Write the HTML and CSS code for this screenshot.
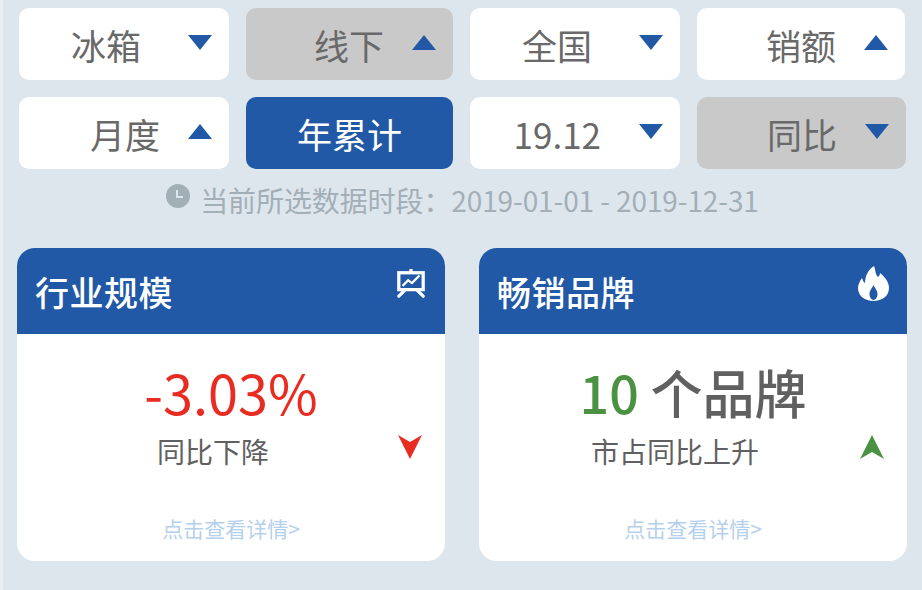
FILE: index.html
```html
<!DOCTYPE html>
<html lang="zh-CN">
  <head>
    <meta charset="UTF-8" />
    <meta name="viewport" content="width=device-width, initial-scale=1.0" />
    <title>行业规模</title>
    <link rel="stylesheet" href="styles.css">
  </head>

  <body>
    <div class="filters">
      <div class="sel"><span class="sel-text gap-l">冰箱</span><i class="arrow down"></i></div>
      <div class="sel gray"><span class="sel-text gap-s">线下</span><i class="arrow up"></i></div>
      <div class="sel"><span class="sel-text gap-l">全国</span><i class="arrow down"></i></div>
      <div class="sel"><span class="sel-text gap-s">销额</span><i class="arrow up"></i></div>
      <div class="sel"><span class="sel-text gap-s">月度</span><i class="arrow up"></i></div>
      <div class="sel active"><span class="sel-text">年累计</span></div>
      <div class="sel"><span class="sel-text gap-m">19.12</span><i class="arrow down"></i></div>
      <div class="sel gray wider"><span class="sel-text gap-s">同比</span><i class="arrow down"></i></div>
    </div>

    <div class="period">
      <svg class="clock" viewBox="0 0 24 24">
        <circle cx="12" cy="12" r="12" fill="#a3afb7" />
        <path d="M11 6v7h6" fill="none" stroke="#dee6ed" stroke-width="2" />
      </svg>
      <span>当前所选数据时段：2019-01-01 - 2019-12-31</span>
    </div>

    <div class="cards">
      <div class="card">
        <div class="card-head">
          <span class="card-title">行业规模</span>
          <svg class="head-icon chart" viewBox="0 0 32 32">
            <path d="M16 0v4" stroke="#fff" stroke-width="3.500" />
            <rect x="3" y="4" width="26" height="18" fill="none" stroke="#fff" stroke-width="3.500" />
            <path d="M7 18l6-6 4 3 8-8" fill="none" stroke="#fff" stroke-width="2.400" />
            <path d="M9 23l-6 6M23 23l6 6" stroke="#fff" stroke-width="3.500" stroke-linecap="round" />
          </svg>
        </div>
        <div class="card-body">
          <div class="value red">-3.03%</div>
          <div class="sub">同比下降</div>
          <svg class="trend" viewBox="0 0 24 24"><path d="M0 0L12 7 24 0 12 24z" fill="#e82c22" /></svg>
          <div class="more">点击查看详情&gt;</div>
        </div>
      </div>

      <div class="card">
        <div class="card-head">
          <span class="card-title">畅销品牌</span>
          <svg class="head-icon fire" viewBox="0 0 31 35">
            <path d="M16 0c2 5 1 8 4 11 1-1 2-2 2-4 5 4 9 9 9 15 0 8-7 13-15.500 13S0 30 0 22c0-4 2-7 4-10 1 2 1 4 3 5C7 10 10 4 16 0z" fill="#fff" />
            <path d="M15.500 19c1 3 4 5 4 9 0 3-2 6-4 6s-4-3-4-6c0-4 3-6 4-9z" fill="#2159a6" />
          </svg>
        </div>
        <div class="card-body">
          <div class="value dark"><span class="green">10</span> 个品牌</div>
          <div class="sub">市占同比上升</div>
          <svg class="trend" viewBox="0 0 24 24"><path d="M12 0L24 24 12 17 0 24z" fill="#4a9141" /></svg>
          <div class="more">点击查看详情&gt;</div>
        </div>
      </div>
    </div>
  </body>
</html>
```

FILE: styles.css
```css
html,
body {
  height: 590px;
  overflow: hidden;
}

body {
  margin: 0;
  padding: 8px 15px 0 14px;
  box-sizing: border-box;
  background-color: #dee6ed;
  border-left: 3px solid #e8eef2;
  font-family: "Noto Sans CJK SC", "Noto Sans", sans-serif;
  color: #606060;
}

.filters {
  display: grid;
  grid-template-columns: 210px 207px 210px 208px;
  grid-auto-rows: 72px;
  column-gap: 17px;
  row-gap: 17px;
  margin-left: 2px;
}

.sel {
  display: flex;
  align-items: center;
  justify-content: flex-end;
  padding-right: 17px;
  background: #ffffff;
  border-radius: 10px;
  font-size: 35px;
  color: #696969;
}

.sel.gray {
  background: #c9c9c9;
}

.sel.wider {
  margin-right: -1px;
}

.sel.active {
  justify-content: center;
  padding-right: 0;
  background: #2159a6;
  color: #ffffff;
}

.gap-l {
  margin-right: 47px;
}

.gap-m {
  margin-right: 38px;
}

.gap-s {
  margin-right: 28px;
}

.arrow {
  width: 0;
  height: 0;
  margin-top: -3px;
  border-left: 12.500px solid transparent;
  border-right: 12.500px solid transparent;
}

.arrow.down {
  border-top: 15px solid #2159a6;
}

.arrow.up {
  border-bottom: 15px solid #2159a6;
}

.period {
  display: flex;
  align-items: center;
  justify-content: center;
  height: 62px;
  padding-left: 1px;
  font-size: 28px;
  letter-spacing: -0.100px;
  color: #a3afb7;
  white-space: nowrap;
}

.clock {
  width: 24px;
  height: 24px;
  margin-top: -9px;
  margin-right: 10px;
}

.cards {
  display: grid;
  grid-template-columns: 428px 428px;
  column-gap: 34px;
  margin-top: 17px;
}

.card {
  height: 313px;
  background: #ffffff;
  border-radius: 18px;
  overflow: hidden;
}

.card-head {
  display: flex;
  align-items: center;
  justify-content: space-between;
  height: 86px;
  padding: 0 18px 0 18px;
  background: #2159a6;
  color: #ffffff;
}

.card-title {
  font-size: 34px;
  font-weight: 500;
  letter-spacing: 0.500px;
}

.head-icon.chart {
  width: 30px;
  height: 30px;
  margin-top: -14px;
  margin-right: 1px;
}

.head-icon.fire {
  width: 31px;
  height: 35px;
  margin-top: -16px;
}

.card-body {
  position: relative;
  padding-top: 26px;
  text-align: center;
}

.value {
  height: 64px;
  font-size: 54px;
  line-height: 64px;
}

.value.red {
  color: #e82c22;
}

.value.dark {
  font-weight: 500;
  font-size: 52px;
}

.green {
  color: #4a9141;
}

.sub {
  height: 44px;
  margin-top: 5px;
  margin-right: 36px;
  font-size: 28px;
  line-height: 44px;
}

.trend {
  position: absolute;
  top: 101px;
  right: 23px;
  width: 24px;
  height: 24px;
}

.more {
  margin-top: 39px;
  font-size: 21px;
  line-height: 32px;
  color: #b5d0eb;
}
```
